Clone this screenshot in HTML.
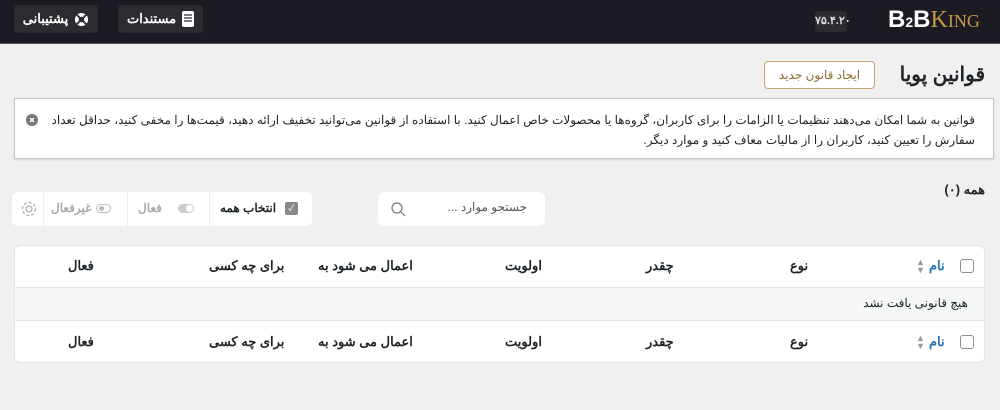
<!DOCTYPE html>
<html><head><meta charset="utf-8"><style>
*{box-sizing:border-box;margin:0;padding:0}
body{width:1000px;height:410px;background:#f0f0f1;font-family:"Liberation Sans","Noto Sans CJK SC",sans-serif;position:relative;overflow:hidden;color:#1d2327}
.abs{position:absolute}
.top{left:0;top:0;width:1000px;height:44px;background:#1c1a22;border-bottom:1px solid #555}
.tb{top:5px;height:28px;background:#2c2b30;border-radius:4px;color:#fff;font-size:13px;font-weight:bold;display:flex;align-items:center;justify-content:center;gap:6px}
.ver{left:815px;top:11px;width:32px;height:21px;background:#2c2b30;border-radius:3px;color:#ddd;font-size:11px;font-weight:bold;text-align:center;line-height:21px}
.logo{left:888px;top:6px;font-family:"Liberation Serif",serif;font-size:24px;white-space:nowrap}
.card{background:#fff;border-radius:6px}
.cb{position:absolute;left:960px;width:14px;height:14px;border:1px solid #8c8f94;border-radius:3px;background:#fff}
.c{position:absolute;white-space:nowrap}
</style></head><body dir="ltr">
<div class="abs top"></div>
<div class="abs tb" style="left:14px;width:84px">پشتیبانی <svg width="15" height="15" viewBox="0 0 16 16"><circle cx="8" cy="8" r="7" fill="#fff"/><circle cx="8" cy="8" r="3" fill="#2c2b30"/><path d="M3 3l3 3M13 3l-3 3M3 13l3-3M13 13l-3-3" stroke="#2c2b30" stroke-width="2"/></svg></div>
<div class="abs tb" style="left:118px;width:85px">مستندات <svg width="12" height="16" viewBox="0 0 12 16"><rect x="0" y="0" width="12" height="16" rx="2" fill="#fff"/><path d="M2 4h8M2 7h8M2 10h8" stroke="#2c2b30" stroke-width="1.3"/></svg></div>
<div class="abs ver">۷۵.۴.۲۰</div>
<div class="abs logo"><b style="color:#fff;font-family:'Liberation Sans',sans-serif">B<span style="font-size:14px">2</span>B</b><span style="color:#c39a45">K<span style="font-size:18px">ING</span></span></div>

<div class="abs" style="right:15px;top:62px;font-size:20px;font-weight:bold;direction:rtl">قوانین پویا</div>
<div class="abs" style="left:764px;top:61px;width:111px;height:28px;border:1px solid #c5a46d;border-radius:4px;background:#fff;color:#8a6d2f;font-size:12px;text-align:center;line-height:26px">ایجاد قانون جدید</div>

<div class="abs" style="left:14px;top:98px;width:980px;height:61px;background:#fff;border:1px solid #c3c4c7;box-shadow:0 1px 2px rgba(0,0,0,.1)"></div>
<div class="abs" style="right:25px;top:110px;width:930px;direction:rtl;font-size:12px;line-height:20px;color:#1d2327">قوانین به شما امکان می‌دهند تنظیمات یا الزامات را برای کاربران، گروه‌ها یا محصولات خاص اعمال کنید. با استفاده از قوانین می‌توانید تخفیف ارائه دهید، قیمت‌ها را مخفی کنید، حداقل تعداد سفارش را تعیین کنید، کاربران را از مالیات معاف کنید و موارد دیگر.</div>
<svg class="abs" style="left:26px;top:114px" width="12" height="12" viewBox="0 0 12 12"><circle cx="6" cy="6" r="6" fill="#777"/><path d="M4 4l4 4M8 4l-4 4" stroke="#fff" stroke-width="1.5"/></svg>

<div class="abs" style="right:15px;top:182px;font-size:13px;font-weight:bold;direction:rtl">همه (۰)</div>

<div class="abs card" style="left:378px;top:192px;width:167px;height:34px"></div>
<div class="abs" style="left:417px;top:200px;width:110px;text-align:right;font-size:12px;color:#50575e;direction:rtl">جستجو موارد ...</div>
<svg class="abs" style="left:390px;top:201px" width="16" height="16" viewBox="0 0 16 16"><circle cx="7" cy="7" r="5" fill="none" stroke="#777" stroke-width="1.2"/><path d="M11 11l4 4" stroke="#777" stroke-width="1.2"/></svg>

<div class="abs card" style="left:12px;top:192px;width:300px;height:34px"></div>
<div class="abs" style="left:209px;top:192px;width:1px;height:34px;background:#eee"></div>
<div class="abs" style="left:127px;top:192px;width:1px;height:34px;background:#eee"></div>
<div class="abs" style="left:43px;top:192px;width:1px;height:34px;background:#eee"></div>
<div class="c" style="left:220px;top:201px;font-size:12px;font-weight:bold;direction:rtl">انتخاب همه</div>
<div class="abs" style="left:285px;top:202px;width:13px;height:13px;background:#888;border-radius:2px;color:#fff;font-size:9px;text-align:center;line-height:13px">✓</div>
<div class="c" style="left:138px;top:201px;font-size:12px;font-weight:bold;color:#aaa">فعال</div>
<div class="abs" style="left:178px;top:204px;width:16px;height:9px;background:#ccc;border-radius:5px"><div style="position:absolute;right:1px;top:1px;width:7px;height:7px;background:#fff;border-radius:50%"></div></div>
<div class="c" style="left:51px;top:201px;font-size:12px;font-weight:bold;color:#aaa">غیرفعال</div>
<div class="abs" style="left:96px;top:204px;width:15px;height:9px;border:1px solid #bbb;border-radius:5px"><div style="position:absolute;left:2px;top:1px;width:5px;height:5px;background:#bbb;border-radius:50%"></div></div>
<svg class="abs" style="left:20px;top:200px" width="18" height="18" viewBox="0 0 18 18"><circle cx="9" cy="9" r="3" fill="none" stroke="#aaa" stroke-width="1.2"/><circle cx="9" cy="9" r="6.5" fill="none" stroke="#aaa" stroke-width="1.2" stroke-dasharray="3 2"/></svg>

<div class="abs card" style="left:14px;top:245px;width:971px;height:118px;border:1px solid #e2e4e7;overflow:hidden"></div>
<div class="abs" style="left:15px;top:287px;width:969px;height:34px;background:#f6f7f7;border-top:1px solid #e2e4e7;border-bottom:1px solid #e2e4e7"></div>
<div class="abs" style="right:32px;top:296px;font-size:12px;direction:rtl">هیچ قانونی یافت نشد</div>

<div class="cb" style="top:259px"></div>
<div class="cb" style="top:335px"></div>
<div class="c" style="left:929px;top:258px;font-size:13px;font-weight:bold;color:#2271b1">نام</div>
<div class="c" style="left:916px;top:258px;font-size:9px;color:#999;line-height:8px">▲<br>▼</div>
<div class="c" style="left:929px;top:334px;font-size:13px;font-weight:bold;color:#2271b1">نام</div>
<div class="c" style="left:916px;top:334px;font-size:9px;color:#999;line-height:8px">▲<br>▼</div>

<div class="c" style="left:790px;top:258px;font-size:13px;font-weight:bold">نوع</div>
<div class="c" style="left:646px;top:258px;font-size:13px;font-weight:bold">چقدر</div>
<div class="c" style="left:505px;top:258px;font-size:13px;font-weight:bold">اولویت</div>
<div class="c" style="left:318px;top:258px;font-size:13px;font-weight:bold">اعمال می شود به</div>
<div class="c" style="left:209px;top:258px;font-size:13px;font-weight:bold">برای چه کسی</div>
<div class="c" style="left:68px;top:258px;font-size:13px;font-weight:bold">فعال</div>

<div class="c" style="left:790px;top:334px;font-size:13px;font-weight:bold">نوع</div>
<div class="c" style="left:646px;top:334px;font-size:13px;font-weight:bold">چقدر</div>
<div class="c" style="left:505px;top:334px;font-size:13px;font-weight:bold">اولویت</div>
<div class="c" style="left:318px;top:334px;font-size:13px;font-weight:bold">اعمال می شود به</div>
<div class="c" style="left:209px;top:334px;font-size:13px;font-weight:bold">برای چه کسی</div>
<div class="c" style="left:68px;top:334px;font-size:13px;font-weight:bold">فعال</div>
</body></html>
